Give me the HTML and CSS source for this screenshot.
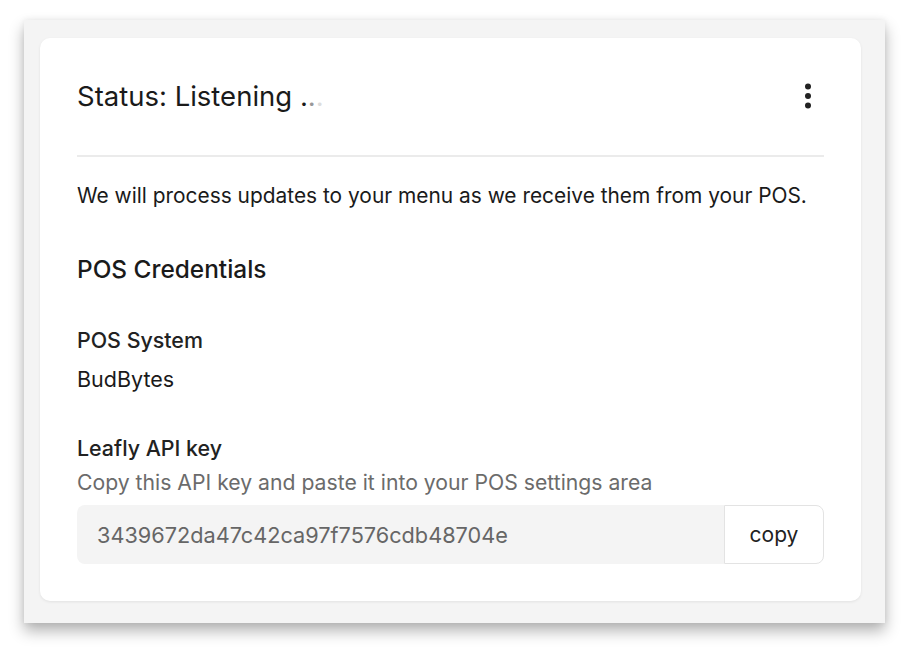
FILE: index.html
```html
<!DOCTYPE html>
<html lang="en">
<head>
  <meta charset="UTF-8" />
  <meta name="viewport" content="width=device-width, initial-scale=1" />
  <title>POS Integration</title>
  <link rel="stylesheet" href="styles.css">
</head>
<body>
  <div class="frame">
    <div class="card">
      <div class="card-header">
        <div class="status">Status: Listening <span class="dots"><span class="d1">.</span><span class="d2">.</span><span class="d3">.</span></span></div>
        <button class="menu-button" aria-label="More options">
          <svg width="8" height="26" viewBox="0 0 8 26" aria-hidden="true">
            <circle cx="4" cy="3.5" r="3" fill="#222"/>
            <circle cx="4" cy="13" r="3" fill="#222"/>
            <circle cx="4" cy="22.5" r="3" fill="#222"/>
          </svg>
        </button>
      </div>

      <p class="intro">We will process updates to your menu as we receive them from your POS.</p>

      <h2 class="section-title">POS Credentials</h2>

      <div class="field">
        <div class="field-label">POS System</div>
        <div class="field-value">BudBytes</div>
      </div>

      <div class="field field-key">
        <div class="field-label">Leafly API key</div>
        <div class="field-hint">Copy this API key and paste it into your POS settings area</div>
        <div class="key-row">
          <div class="key-input">3439672da47c42ca97f7576cdb48704e</div>
          <button class="copy-button">copy</button>
        </div>
      </div>
    </div>
  </div>
</body>
</html>
```

FILE: styles.css
```css
* {
  margin: 0;
  padding: 0;
  box-sizing: border-box;
}
html, body {
  background: #fff;
  font-family: 'Inter', 'Noto Sans', sans-serif;
  color: #1a1a1a;
}
body {
  min-height: 654px;
  padding: 20px 27px 31px 24px;
}
/* серая подложка со "скриншотной" тенью */
.frame {
  width: 861px;
  height: 603px;
  background: #f4f4f4;
  padding: 18px 24px 22px 16px;
  box-shadow: 0 8px 14px rgba(0,0,0,0.3), 0 0 6px rgba(0,0,0,0.07);
}
.card {
  width: 821px;
  height: 563px;
  background: #fff;
  border-radius: 10px;
  padding: 41px 37px 37px 37px;
  box-shadow: 0 1px 3px rgba(0,0,0,0.08);
}
.card-header {
  display: flex;
  align-items: center;
  justify-content: space-between;
  height: 34px;
  margin-bottom: 42px;
}
.status {
  font-size: 27.5px;
  line-height: 34px;
  color: #1a1a1a;
}
.dots .d2 { color: #999; }
.dots .d3 { color: #ddd; }
.menu-button {
  border: none;
  background: none;
  width: 26px;
  height: 34px;
  display: flex;
  align-items: center;
  justify-content: center;
  margin-right: 3px;
  cursor: pointer;
}
.intro {
  border-top: 2px solid #ebebeb;
  padding-top: 25px;
  font-size: 20.9px;
  line-height: 28px;
}
.section-title {
  margin-top: 44px;
  font-size: 24.4px;
  font-weight: 500;
  line-height: 30px;
}
.field {
  margin-top: 42px;
}
.field-key {
  margin-top: 41px;
}
.field-label {
  font-size: 21.4px;
  font-weight: 500;
  line-height: 28px;
  color: #222;
}
.field-value {
  margin-top: 11px;
  font-size: 21.5px;
  line-height: 28px;
}
.field-hint {
  margin-top: 6px;
  font-size: 21.2px;
  line-height: 28px;
  color: #6b6b6b;
}
.key-row {
  display: flex;
  margin-top: 9px;
  height: 59px;
}
.key-input {
  flex: 1;
  background: #f4f4f4;
  border-radius: 8px 0 0 8px;
  padding: 0 20px;
  display: flex;
  align-items: center;
  font-size: 21.7px;
  color: #666;
}
.copy-button {
  width: 100px;
  background: #fff;
  border: 1px solid #e3e3e3;
  border-radius: 0 8px 8px 0;
  font-family: inherit;
  font-size: 21px;
  color: #222;
  cursor: pointer;
}
```
